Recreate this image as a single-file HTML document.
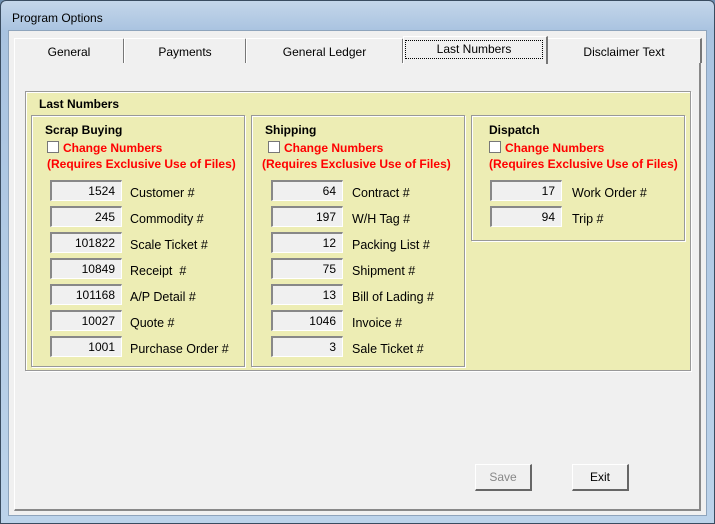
<!DOCTYPE html><html><head><style>
*{box-sizing:border-box}body{margin:0;width:715px;height:524px;overflow:hidden;background:#6f8fb0;font-family:"Liberation Sans",sans-serif;font-size:12px;position:relative}
.a{position:absolute}
.win{left:0;top:0;width:715px;height:524px;background:linear-gradient(#c4d6ea,#a9c3e0 30px,#bcd3ea);border:1px solid #3a4c60;border-radius:6px 6px 0 0}
.body{left:8px;top:30px;width:699px;height:486px;background:#f0f0f0;border:1px solid #8ea4bc}
.tab{top:38px;height:25px;border-top:1px solid #fff;border-left:1px solid #fff;border-right:2px solid #777;text-align:center;line-height:26px;font-size:12px;background:#f0f0f0}
.panel{left:14px;top:62px;width:687px;height:449px;border-left:1px solid #fff;border-top:1px solid #fff;border-right:2px solid #888;border-bottom:2px solid #888}
.g{background:#ededb4;border:1px solid #999;box-shadow:inset 1px 1px 0 #fff,1px 1px 0 #fff}
.b{font-weight:bold}
.red{color:#f00;font-weight:bold}
.cb{width:12px;height:12px;background:#fff;border:1px solid #777}
.tb{width:72px;height:21px;background:#f0f0f0;border-top:2px solid #888;border-left:2px solid #888;border-right:1px solid #fff;border-bottom:1px solid #fff;text-align:right;padding-right:6px;line-height:18px;font-size:12px}
.btn{top:464px;width:57px;height:27px;border-top:1px solid #fff;border-left:1px solid #fff;border-right:2px solid #666;border-bottom:2px solid #666;text-align:center;line-height:25px;background:#f0f0f0}
</style></head><body>
<div class="a win"></div>
<div class="a" style="left:12px;top:11px;font-size:12px">Program Options</div>
<div class="a body"></div>
<div class="a panel"></div>
<div class="a tab" style="left:14px;width:111px">General</div>
<div class="a tab" style="left:124px;width:123px">Payments</div>
<div class="a tab" style="left:246px;width:158px">General Ledger</div>
<div class="a tab" style="left:547px;width:155px">Disclaimer Text</div>
<div class="a" style="left:403px;top:36px;width:145px;height:28px;background:#f0f0f0;border-left:1px solid #fff;border-top:1px solid #fff;border-right:2px solid #777"></div>
<div class="a" style="left:405px;top:40px;width:138px;height:19px;border:1px dotted #000;text-align:center;line-height:17px">Last Numbers</div>
<div class="a g" style="left:25px;top:91px;width:666px;height:280px"></div>
<div class="a b" style="left:39px;top:97px">Last Numbers</div>
<div class="a g" style="left:31px;top:115px;width:214px;height:252px"></div>
<div class="a g" style="left:251px;top:115px;width:214px;height:252px"></div>
<div class="a g" style="left:471px;top:115px;width:214px;height:126px"></div>
<div class="a b" style="left:45px;top:123px">Scrap Buying</div>
<div class="a b" style="left:265px;top:123px">Shipping</div>
<div class="a b" style="left:489px;top:123px">Dispatch</div>
<div class="a cb" style="left:47px;top:141px"></div><div class="a red" style="left:63px;top:141px">Change Numbers</div><div class="a red" style="left:47px;top:157px">(Requires Exclusive Use of Files)</div>
<div class="a cb" style="left:268px;top:141px"></div><div class="a red" style="left:284px;top:141px">Change Numbers</div><div class="a red" style="left:262px;top:157px">(Requires Exclusive Use of Files)</div>
<div class="a cb" style="left:489px;top:141px"></div><div class="a red" style="left:505px;top:141px">Change Numbers</div><div class="a red" style="left:489px;top:157px">(Requires Exclusive Use of Files)</div>
<div id="rows"></div>
<div class="a btn" style="left:475px;color:#888">Save</div>
<div class="a btn" style="left:572px">Exit</div>
<script>
var cols=[[50,130,[["1524","Customer #"],["245","Commodity #"],["101822","Scale Ticket #"],["10849","Receipt &nbsp;#"],["101168","A/P Detail #"],["10027","Quote #"],["1001","Purchase Order #"]]],
[271,352,[["64","Contract #"],["197","W/H Tag #"],["12","Packing List #"],["75","Shipment #"],["13","Bill of Lading #"],["1046","Invoice #"],["3","Sale Ticket #"]]],
[490,572,[["17","Work Order #"],["94","Trip #"]]]];
var h="";cols.forEach(function(c){c[2].forEach(function(r,i){var y=180+i*26;h+='<div class="a tb" style="left:'+c[0]+'px;top:'+y+'px">'+r[0]+'</div><div class="a" style="left:'+c[1]+'px;top:'+(y+6)+'px;font-size:12.5px">'+r[1]+'</div>';});});
document.getElementById("rows").innerHTML=h;
</script>
</body></html>
